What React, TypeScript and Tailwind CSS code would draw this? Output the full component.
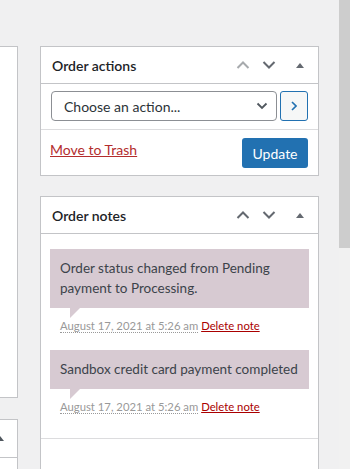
import React from 'react';

const FONT = "font-['Segoe_UI','Lato',sans-serif]";

function ChevronUp({ className }: { className?: string }) {
  return (
    <svg width="14" height="8" viewBox="0 0 14 8" className={className}>
      <polyline points="1.5,7 7,1.5 12.5,7" fill="none" stroke="currentColor" strokeWidth="2" />
    </svg>
  );
}

function ChevronDown({ className }: { className?: string }) {
  return (
    <svg width="14" height="8" viewBox="0 0 14 8" className={className}>
      <polyline points="1.5,1 7,6.5 12.5,1" fill="none" stroke="currentColor" strokeWidth="2" />
    </svg>
  );
}

function Triangle({ className }: { className?: string }) {
  return (
    <svg width="8" height="5" viewBox="0 0 8 5" className={className}>
      <polygon points="0,5 4,0 8,5" fill="currentColor" />
    </svg>
  );
}

function PostboxHeader({ title, upDisabled }: { title: string; upDisabled?: boolean }) {
  return (
    <div className="flex h-[37px] items-center border-b border-[#c3c4c7]">
      <h2 className="flex-1 pl-[11px] text-[14px] font-semibold text-[#1d2327]">{title}</h2>
      <div className="flex h-full items-center">
        <button className={`flex h-full w-[26px] items-center justify-center ${upDisabled ? 'text-[#a7aaad]' : 'text-[#646970]'}`}>
          <ChevronUp />
        </button>
        <button className="flex h-full w-[26px] items-center justify-center text-[#646970]">
          <ChevronDown />
        </button>
        <button className="flex h-full w-[36px] items-center justify-center text-[#646970]">
          <Triangle />
        </button>
      </div>
    </div>
  );
}

interface Note {
  text: string;
  date: string;
}

const NOTES: Note[] = [
  { text: 'Order status changed from Pending payment to Processing.', date: 'August 17, 2021 at 5:26 am' },
  { text: 'Sandbox credit card payment completed', date: 'August 17, 2021 at 5:26 am' },
];

function OrderNote({ note }: { note: Note }) {
  return (
    <li className="px-[9px]">
      <div className="relative bg-[#d7cad2] p-[10px] text-[13.5px] leading-[19.5px] text-[#3c434a]">
        <p>{note.text}</p>
        <span className="absolute bottom-[-10px] left-[20px] h-0 w-0 border-r-[10px] border-t-[10px] border-r-transparent border-t-[#d7cad2]" />
      </div>
      <p className="p-[10px] text-[11.3px] leading-[16.5px] text-[#999]">
        <abbr className="border-b border-dotted border-[#999] no-underline">{note.date}</abbr>{' '}
        <a href="#" className="text-[#a00] underline">Delete note</a>
      </p>
    </li>
  );
}

export default function App() {
  return (
    <div className={`flex h-[469px] w-[350px] overflow-hidden bg-[#f0f0f1] ${FONT}`}>
      <div className="flex flex-1 gap-[22px] pt-[46px]">
        {/* left column, mostly off screen */}
        <div className="flex w-[18px] shrink-0 flex-col gap-[21px]">
          <div className="h-[352px] border-y border-r border-[#c3c4c7] bg-white" />
          <div className="flex-1 border-t border-r border-[#c3c4c7] bg-white">
            <div className="flex h-[38px] items-center justify-end border-b border-[#c3c4c7] pr-[13px] text-[#50575e]">
              <Triangle className="shrink-0" />
            </div>
          </div>
        </div>

        {/* right sidebar */}
        <div className="flex w-[279px] shrink-0 flex-col gap-[20px]">
          <div className="border border-[#c3c4c7] bg-white">
            <PostboxHeader title="Order actions" upDisabled />
            <div className="flex h-[46px] gap-[3px] border-b border-[#dcdcde] px-[10px] pt-[7px]">
              <div className="flex h-[30px] w-[226px] items-center justify-between rounded-[4px] border border-[#8c8f94] pl-[12px] pr-[8px] text-[14px] text-[#2c3338]">
                <span>Choose an action...</span>
                <svg width="12" height="8" viewBox="0 0 12 8" className="text-[#50575e]">
                  <polyline points="1.5,1.5 6,6 10.5,1.5" fill="none" stroke="currentColor" strokeWidth="1.8" />
                </svg>
              </div>
              <button className="flex h-[30px] w-[28px] items-center justify-center rounded-[3px] border border-[#2271b1] bg-[#f6f7f7] text-[#2271b1]">
                <svg width="6" height="10" viewBox="0 0 6 10">
                  <polyline points="1,1 5,5 1,9" fill="none" stroke="currentColor" strokeWidth="1.6" />
                </svg>
              </button>
            </div>
            <div className="flex h-[45px] items-start justify-between pl-[9px] pr-[10px] pt-[8px]">
              <a href="#" className="mt-[2px] text-[14px] leading-[20px] text-[#b32d2e] underline">Move to Trash</a>
              <button className="h-[30px] w-[66px] rounded-[3px] bg-[#2271b1] text-[14px] text-white">Update</button>
            </div>
          </div>

          <div className="flex-1 border-x border-t border-[#c3c4c7] bg-white">
            <PostboxHeader title="Order notes" />
            <ul className="flex flex-col gap-[5px] border-b border-[#dcdcde] pb-[12px] pt-[15px]">
              {NOTES.map((n, i) => (
                <OrderNote key={i} note={n} />
              ))}
            </ul>
          </div>
        </div>
      </div>

      {/* scrollbar */}
      <div className="flex w-[11px] shrink-0 flex-col bg-[#f1f1f1]">
        <div className="h-[248px] bg-[#cdcdcd]" />
      </div>
    </div>
  );
}
